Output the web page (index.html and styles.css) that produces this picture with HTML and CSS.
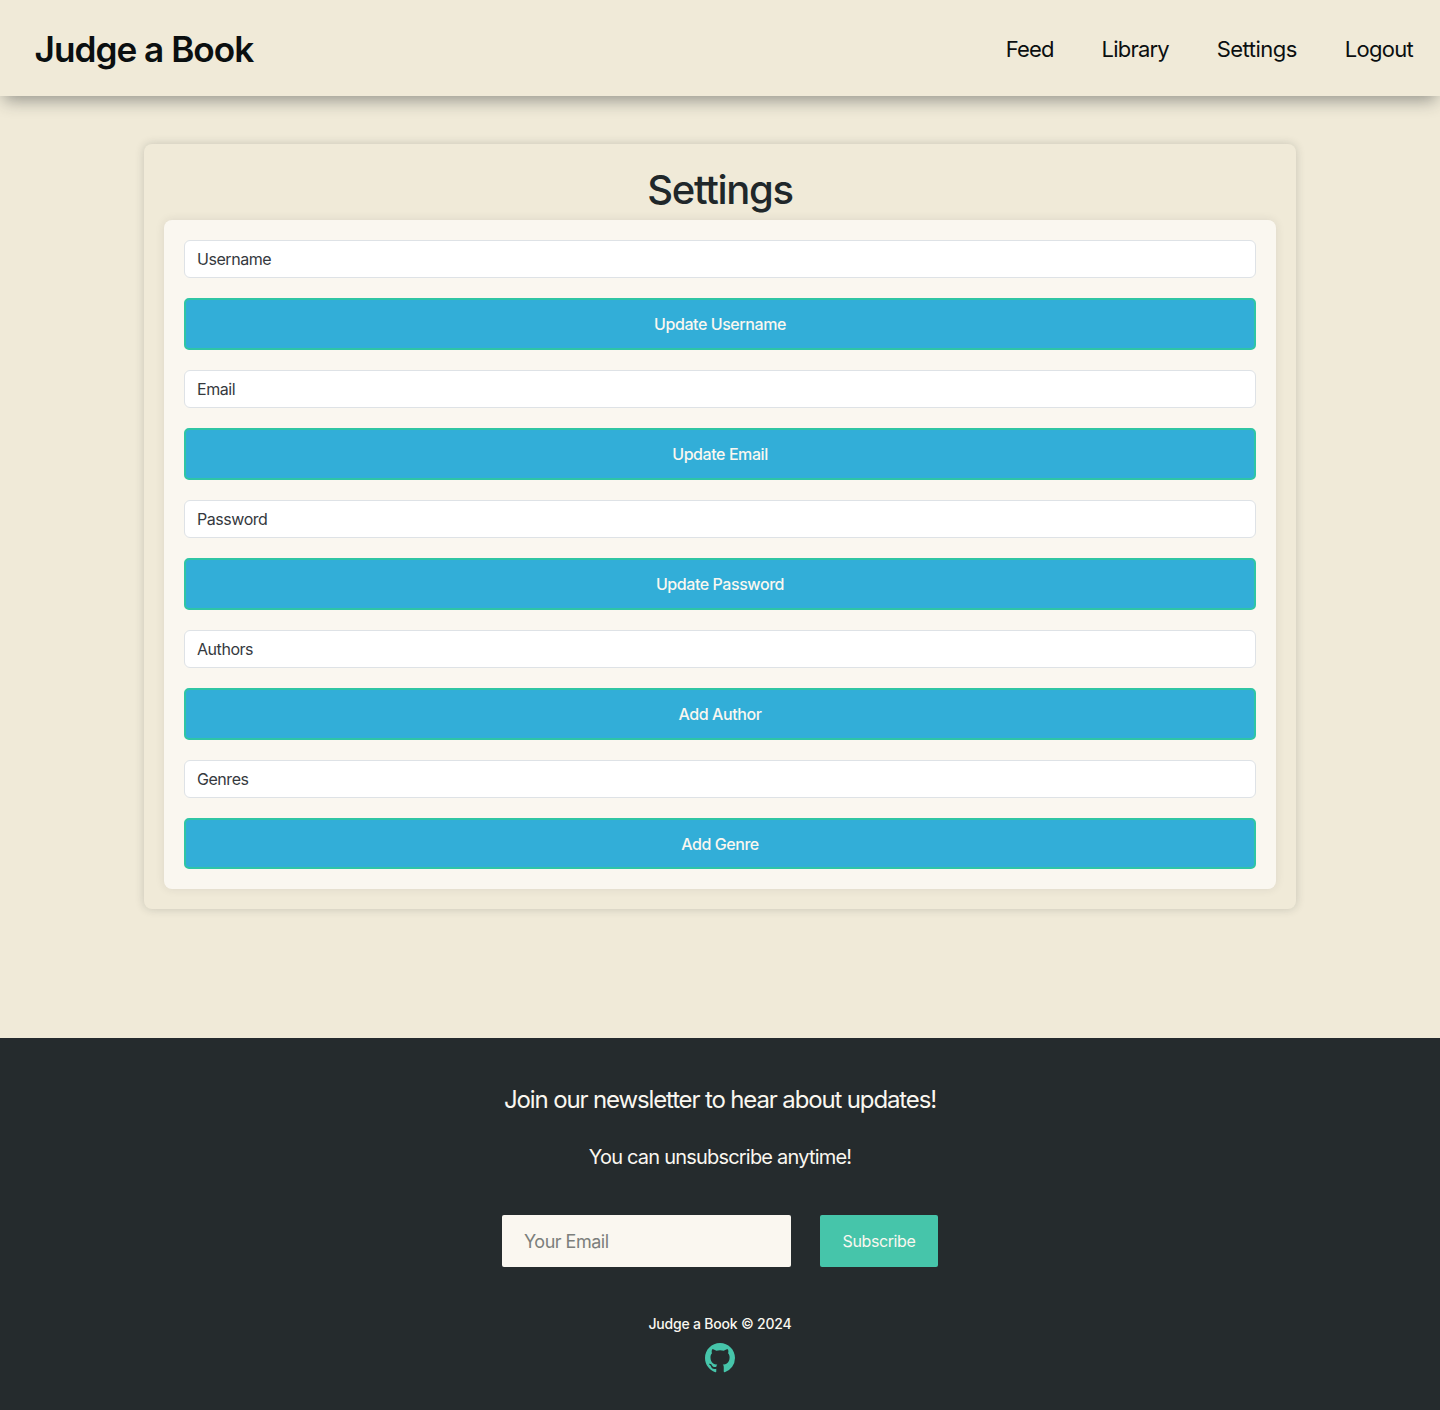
FILE: index.html
```html
<!DOCTYPE html>
<html lang="en">
<head>
<meta charset="utf-8">
<title>Judge a Book</title>
<link rel="stylesheet" href="styles.css">
</head>
<body>
<header class="header">
  <a class="brand">Judge a Book</a>
  <nav class="nav">
    <a class="nav-feed">Feed</a>
    <a class="nav-library">Library</a>
    <a class="nav-settings">Settings</a>
    <a class="nav-logout">Logout</a>
  </nav>
</header>
<main class="main">
  <section class="card">
    <h1 class="title">Settings</h1>
    <form class="form">
      <input class="field" type="text" placeholder="Username">
      <button class="btn" type="button">Update Username</button>
      <input class="field" type="text" placeholder="Email">
      <button class="btn" type="button">Update Email</button>
      <input class="field" type="text" placeholder="Password">
      <button class="btn" type="button">Update Password</button>
      <input class="field" type="text" placeholder="Authors">
      <button class="btn" type="button">Add Author</button>
      <input class="field" type="text" placeholder="Genres">
      <button class="btn" type="button">Add Genre</button>
    </form>
  </section>
</main>
<footer class="footer">
  <p class="join">Join our newsletter to hear about updates!</p>
  <p class="unsub">You can unsubscribe anytime!</p>
  <form class="subscribe">
    <input class="email" type="email" placeholder="Your Email">
    <button class="subscribe-btn" type="button">Subscribe</button>
  </form>
  <small class="copy">Judge a Book © 2024</small>
  <svg class="github" viewBox="0 0 16 16" aria-hidden="true"><path d="M8 0C3.58 0 0 3.58 0 8c0 3.54 2.29 6.53 5.47 7.59.4.07.55-.17.55-.38 0-.19-.01-.82-.01-1.49-2.01.37-2.53-.49-2.69-.94-.09-.23-.48-.94-.82-1.13-.28-.15-.68-.52-.01-.53.63-.01 1.08.58 1.23.82.72 1.21 1.87.87 2.33.66.07-.52.28-.87.51-1.07-1.78-.2-3.64-.89-3.64-3.95 0-.87.31-1.59.82-2.15-.08-.2-.36-1.02.08-2.12 0 0 .67-.21 2.2.82.64-.18 1.32-.27 2-.27s1.36.09 2 .27c1.53-1.04 2.2-.82 2.2-.82.44 1.1.16 1.92.08 2.12.51.56.82 1.27.82 2.15 0 3.07-1.87 3.75-3.65 3.95.29.25.54.73.54 1.48 0 1.07-.01 1.93-.01 2.2 0 .21.15.46.55.38A8.01 8.01 0 0 0 16 8c0-4.42-3.58-8-8-8"/></svg>
</footer>
</body>
</html>
```

FILE: styles.css
```css
* { box-sizing: border-box; }
body {
  margin: 0;
  min-height: 1410px;
  display: flex;
  flex-direction: column;
  background: #f0ead8;
  color: #212529;
  font: 16px/1.5 Inter, "Liberation Sans", sans-serif;
}
input, button { font: inherit; }
.header {
  height: 96px;
  padding: 2px 27px 0 34.5px;
  display: flex;
  justify-content: space-between;
  align-items: center;
  color: #0b0f10;
  box-shadow: 0 8px 16px -4px rgba(37, 43, 45, .46);
}
.brand { font-size: 35.2px; font-weight: 600; letter-spacing: -1px; }
.nav { display: flex; gap: 47.8px; font-size: 22px; letter-spacing: -.5px; }
.nav-feed { letter-spacing: -.8px; }
.nav-library { letter-spacing: -.8px; }
.nav-logout { letter-spacing: -.7px; }
.main { padding: 48px 144px 0; flex: 1; }
.card {
  padding: 20px;
  border-radius: 8px;
  background: #f0ead8;
  box-shadow: 0 0 10px rgba(37, 43, 45, .2);
}
.title {
  margin: 0;
  padding-top: 2px;
  height: 56px;
  font-size: 40px;
  line-height: 48px;
  font-weight: 500;
  text-align: center;
  color: #20272a;
  letter-spacing: -1.3px;
}
.form {
  padding: 20px;
  display: grid;
  gap: 20px;
  border-radius: 8px;
  background: #faf7f0;
  box-shadow: 0 0 10px rgba(37, 43, 45, .1);
}
.field {
  width: 100%;
  height: 38px;
  padding: 0 12px;
  border: 1px solid #dee2e6;
  border-radius: 6px;
  background: #fff;
  letter-spacing: -.45px;
}
.field::placeholder { color: #35393e; opacity: 1; }
.btn {
  height: 51.9px;
  padding: 0;
  border: 2px solid #2fc5a5;
  border-radius: 5px;
  background: #32aed8;
  color: #faf7f0;
  font-weight: 500;
  letter-spacing: -.43px;
}
.footer {
  height: 372.5px;
  padding-top: 44.5px;
  display: flex;
  flex-direction: column;
  align-items: center;
  background: #252b2d;
  color: #faf7f0;
}
.join { margin: 0; font-size: 24px; line-height: 36px; letter-spacing: -1.14px; }
.unsub { margin: 23.5px 0 0; font-size: 20px; line-height: 30px; letter-spacing: -.8px; }
.subscribe { margin-top: 43px; display: flex; gap: 29px; }
.email {
  width: 289px;
  height: 52px;
  padding: 2px 22px 0;
  border: 0;
  border-radius: 2px;
  background: #faf7f0;
  font-size: 18px;
  letter-spacing: -.5px;
}
.email::placeholder { color: #7c7f7c; opacity: 1; }
.subscribe-btn {
  width: 118px;
  height: 52px;
  padding: 0;
  border: 0;
  border-radius: 2px;
  background: #46c5aa;
  color: #faf7f0;
  letter-spacing: -.4px;
}
.copy { margin-top: 46px; font-size: 14px; line-height: 21px; font-weight: 500; letter-spacing: -.2px; }
.github { margin-top: 9px; width: 30px; height: 30px; fill: #46c5aa; }
```
